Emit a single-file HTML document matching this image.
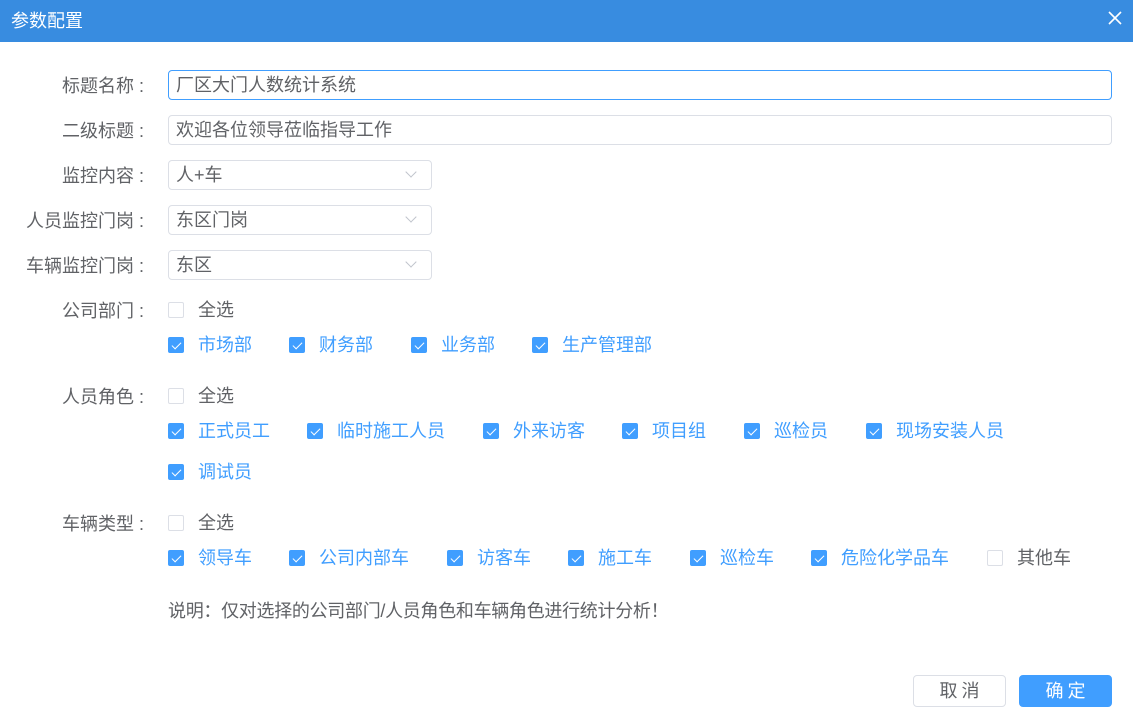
<!DOCTYPE html>
<html><head><meta charset="utf-8"><style>
*{margin:0;padding:0;box-sizing:border-box}
body{width:1133px;height:726px;background:#fff;font-family:"Liberation Sans","Noto Sans CJK SC",sans-serif;position:relative;overflow:hidden;color:#606266}
.hd{position:absolute;left:0;top:0;width:1133px;height:42px;background:#388ce0;color:#fff;font-size:18px;line-height:42px;padding-left:11px}
.x{position:absolute;right:10px;top:10px;width:16px;height:16px}
.lb{position:absolute;right:989px;font-size:18px;color:#606266;text-align:right;white-space:nowrap}
.lb b{font-weight:normal;margin-left:5px}
.in{position:absolute;left:168px;height:30px;border:1px solid #dcdfe6;border-radius:4px;font-size:18px;color:#606266;padding-left:7px;line-height:28px}
.sel{width:264px}
.sel:after{content:"";position:absolute;right:16px;top:7px;width:7px;height:7px;border-right:1px solid #c0c4cc;border-bottom:1px solid #c0c4cc;transform:rotate(45deg)}
.cb{position:absolute;font-size:18px;white-space:nowrap;line-height:20px}
.cb i{position:absolute;left:0;top:2px;width:16px;height:16px;border:1px solid #dcdfe6;border-radius:2px;background:#fff}
.cb span{margin-left:30px}
.cb.on{color:#409eff}
.cb.on i{background:#409eff;border-color:#409eff}
.cb.on i:after{content:"";position:absolute;left:4.5px;top:1.5px;width:4px;height:8px;border-right:1.5px solid #fff;border-bottom:1.5px solid #fff;transform:rotate(45deg)}
.btn{position:absolute;top:675px;width:93px;height:32px;border-radius:4px;font-size:18px;text-align:center;line-height:30px;letter-spacing:4px;padding-left:4px}
</style></head><body>
<div class="hd">参数配置<svg class="x" viewBox="0 0 16 16"><path d="M2 2L14 14M14 2L2 14" stroke="#fff" stroke-width="1.6"/></svg></div>

<div class="lb" style="top:72px">标题名称<b>:</b></div>
<div class="in" style="top:70px;width:944px;border-color:#409eff">厂区大门人数统计系统</div>
<div class="lb" style="top:117px">二级标题<b>:</b></div>
<div class="in" style="top:115px;width:944px">欢迎各位领导莅临指导工作</div>
<div class="lb" style="top:162px">监控内容<b>:</b></div>
<div class="in sel" style="top:160px">人+车</div>
<div class="lb" style="top:207px">人员监控门岗<b>:</b></div>
<div class="in sel" style="top:205px">东区门岗</div>
<div class="lb" style="top:252px">车辆监控门岗<b>:</b></div>
<div class="in sel" style="top:250px">东区</div>

<div class="lb" style="top:297px">公司部门<b>:</b></div>
<div class="cb" style="left:168px;top:300px"><i></i><span>全选</span></div>
<div class="cb on" style="left:168px;top:335px"><i></i><span>市场部</span></div>
<div class="cb on" style="left:289px;top:335px"><i></i><span>财务部</span></div>
<div class="cb on" style="left:411px;top:335px"><i></i><span>业务部</span></div>
<div class="cb on" style="left:532px;top:335px"><i></i><span>生产管理部</span></div>

<div class="lb" style="top:383px">人员角色<b>:</b></div>
<div class="cb" style="left:168px;top:386px"><i></i><span>全选</span></div>
<div class="cb on" style="left:168px;top:421px"><i></i><span>正式员工</span></div>
<div class="cb on" style="left:307px;top:421px"><i></i><span>临时施工人员</span></div>
<div class="cb on" style="left:483px;top:421px"><i></i><span>外来访客</span></div>
<div class="cb on" style="left:622px;top:421px"><i></i><span>项目组</span></div>
<div class="cb on" style="left:744px;top:421px"><i></i><span>巡检员</span></div>
<div class="cb on" style="left:866px;top:421px"><i></i><span>现场安装人员</span></div>
<div class="cb on" style="left:168px;top:462px"><i></i><span>调试员</span></div>

<div class="lb" style="top:510px">车辆类型<b>:</b></div>
<div class="cb" style="left:168px;top:513px"><i></i><span>全选</span></div>
<div class="cb on" style="left:168px;top:548px"><i></i><span>领导车</span></div>
<div class="cb on" style="left:289px;top:548px"><i></i><span>公司内部车</span></div>
<div class="cb on" style="left:447px;top:548px"><i></i><span>访客车</span></div>
<div class="cb on" style="left:568px;top:548px"><i></i><span>施工车</span></div>
<div class="cb on" style="left:690px;top:548px"><i></i><span>巡检车</span></div>
<div class="cb on" style="left:811px;top:548px"><i></i><span>危险化学品车</span></div>
<div class="cb" style="left:987px;top:548px"><i></i><span>其他车</span></div>

<div style="position:absolute;left:168px;top:597px;font-size:18px;color:#606266;letter-spacing:-0.3px">说明：仅对选择的公司部门/人员角色和车辆角色进行统计分析！</div>

<div class="btn" style="left:913px;border:1px solid #dcdfe6;color:#606266">取消</div>
<div class="btn" style="left:1019px;background:#409eff;color:#fff;border:1px solid #409eff">确定</div>
</body></html>
